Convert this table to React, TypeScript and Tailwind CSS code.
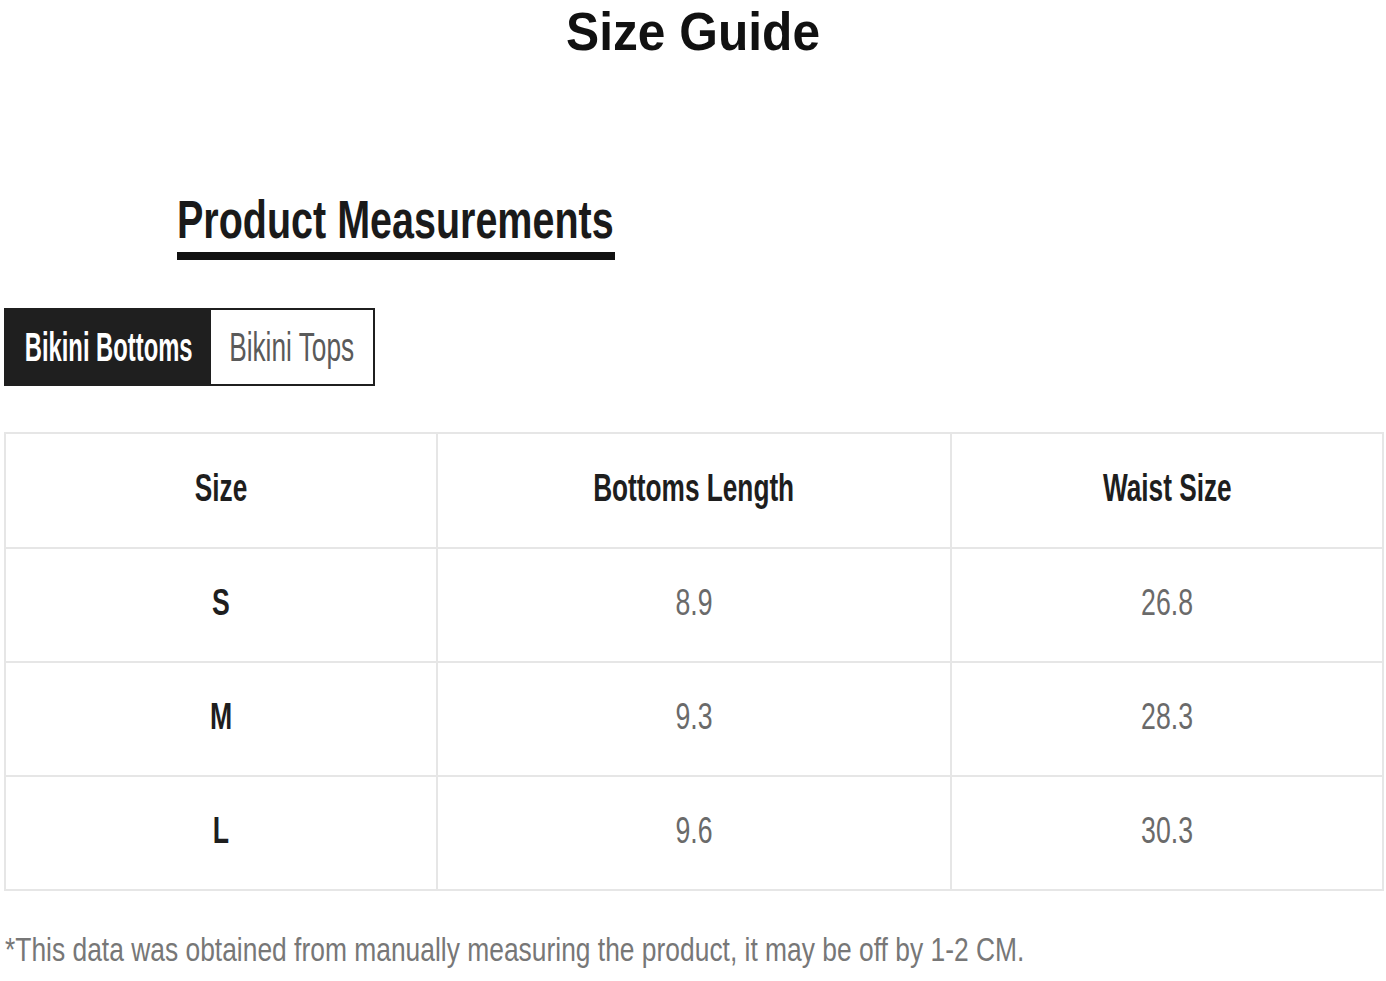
import React from "react";

const ROWS = [
    { size: "S", length: "8.9", waist: "26.8" },
    { size: "M", length: "9.3", waist: "28.3" },
    { size: "L", length: "9.6", waist: "30.3" },
];

export default function App() {
    return (
        <div className="w-[1386px] h-[981px] bg-white px-[4px] font-['Liberation_Sans',Arial,sans-serif] overflow-hidden">
            {/* Title */}
            <h1 className="mt-[4px] h-[54px] text-center text-[54px] leading-none font-bold text-[#111]">
                <span className="inline-block scale-x-[0.92]">Size Guide</span>
            </h1>

            {/* Section heading */}
            <div className="mt-[135px] ml-[173px] w-[438px] pb-[6px] border-b-[8px] border-[#111]">
                <div className="h-[53px] text-[53px] leading-none font-bold text-[#1a1a1a] whitespace-nowrap">
                    <span className="inline-block origin-left scale-x-[0.745]">Product Measurements</span>
                </div>
            </div>

            {/* Tabs */}
            <div className="mt-[48px] flex w-[371px] h-[78px] border-2 border-[#1f1f1f] overflow-hidden">
                <button className="w-[205px] shrink-0 h-full bg-[#1f1f1f] text-white text-[41px] leading-none font-bold whitespace-nowrap flex items-center justify-center overflow-hidden">
                    <span className="inline-block scale-x-[0.58]">Bikini Bottoms</span>
                </button>
                <button className="flex-1 min-w-0 h-full bg-white text-[#5a5a5a] text-[41px] leading-none whitespace-nowrap flex items-center justify-center overflow-hidden">
                    <span className="inline-block scale-x-[0.64]">Bikini Tops</span>
                </button>
            </div>

            {/* Table */}
            <table className="mt-[46px] w-[1378px] table-fixed border-collapse border-2 border-[#e6e6e6]">
                <colgroup>
                    <col className="w-[432px]" />
                    <col className="w-[514px]" />
                    <col className="w-[432px]" />
                </colgroup>
                <thead>
                    <tr className="h-[115px]">
                        {["Size", "Bottoms Length", "Waist Size"].map((h) => (
                            <th
                                key={h}
                                className="border-2 border-[#e6e6e6] pb-[6px] text-center align-middle text-[38px] leading-none font-bold text-[#1e1e1e] whitespace-nowrap"
                            >
                                <span className="inline-block scale-x-[0.69]">{h}</span>
                            </th>
                        ))}
                    </tr>
                </thead>
                <tbody>
                    {ROWS.map((r) => (
                        <tr key={r.size} className="h-[114px]">
                            <td className="border-2 border-[#e6e6e6] pb-[5px] text-center align-middle text-[36px] leading-none font-bold text-[#1e1e1e]">
                                <span className="inline-block scale-x-[0.74]">{r.size}</span>
                            </td>
                            <td className="border-2 border-[#e6e6e6] pb-[5px] text-center align-middle text-[36px] leading-none text-[#6a6a6a]">
                                <span className="inline-block scale-x-[0.74]">{r.length}</span>
                            </td>
                            <td className="border-2 border-[#e6e6e6] pb-[5px] text-center align-middle text-[36px] leading-none text-[#6a6a6a]">
                                <span className="inline-block scale-x-[0.74]">{r.waist}</span>
                            </td>
                        </tr>
                    ))}
                </tbody>
            </table>

            {/* Note */}
            <p className="mt-[42px] ml-[1px] h-[33px] text-[33px] leading-none text-[#777] whitespace-nowrap">
                <span className="inline-block origin-left scale-x-[0.8]">
                    *This data was obtained from manually measuring the product, it may be off by 1-2 CM.
                </span>
            </p>
        </div>
    );
}
